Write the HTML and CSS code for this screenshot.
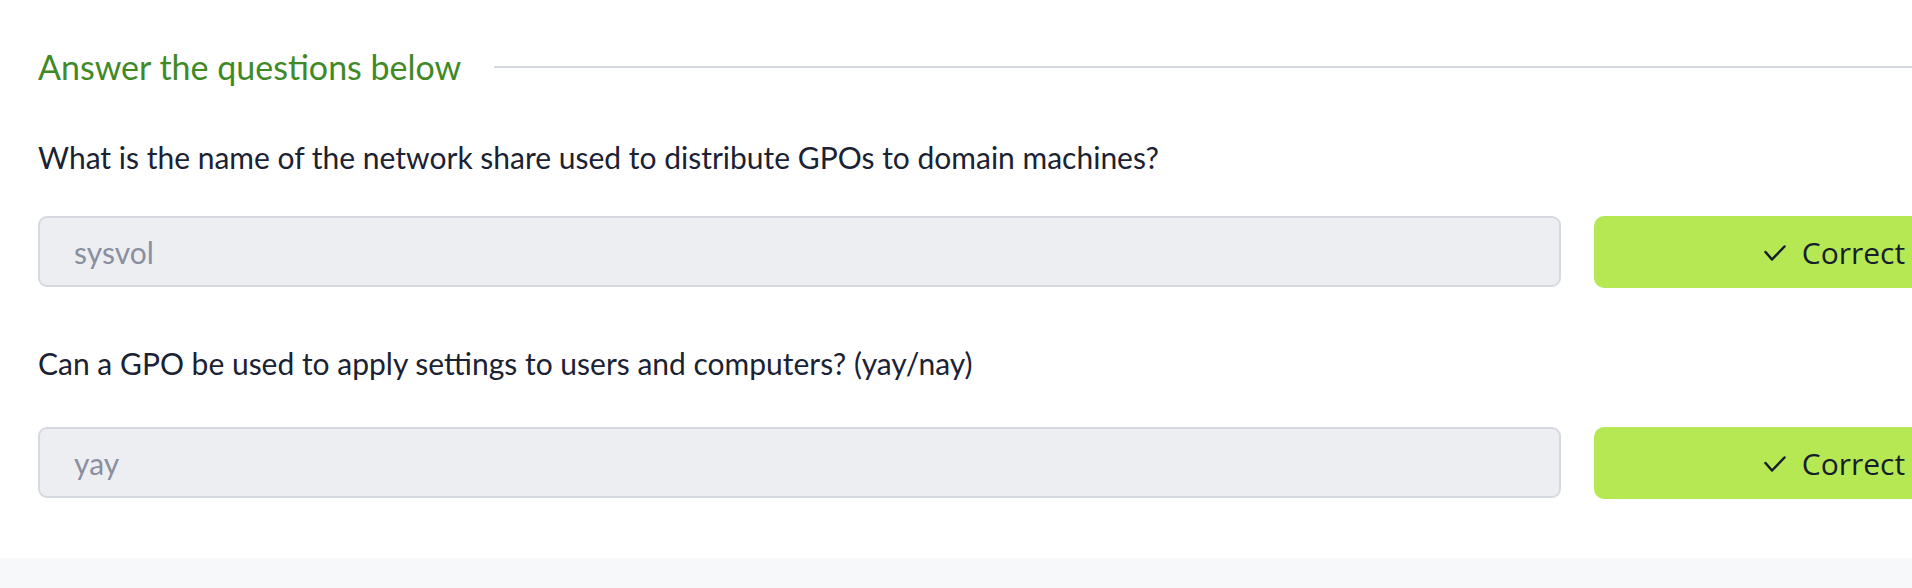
FILE: index.html
```html
<!DOCTYPE html>
<html lang="en">
<head>
<meta charset="utf-8">
<title>Answer the questions below</title>
<link rel="stylesheet" href="styles.css">
</head>
<body>
<main class="page">
  <section class="card">
    <div class="heading">
      <h2 class="heading-title">Answer the questions below</h2>
      <span class="heading-rule"></span>
    </div>

    <div class="question">
      <p class="question-text">What is the name of the network share used to distribute GPOs to domain machines?</p>
      <div class="answer-row">
        <input class="answer-input" type="text" value="sysvol" disabled>
        <button class="answer-btn" type="button">
          <svg class="check" width="22" height="17" viewBox="0 0 22 17" aria-hidden="true"><polyline points="1.5,7 8,14.5 20.5,1.5" fill="none" stroke="currentColor" stroke-width="2.5" stroke-linecap="round" stroke-linejoin="round"/></svg>
          <span>Correct</span>
        </button>
      </div>
    </div>

    <div class="question">
      <p class="question-text">Can a GPO be used to apply settings to users and computers? (yay/nay)</p>
      <div class="answer-row">
        <input class="answer-input" type="text" value="yay" disabled>
        <button class="answer-btn" type="button">
          <svg class="check" width="22" height="17" viewBox="0 0 22 17" aria-hidden="true"><polyline points="1.5,7 8,14.5 20.5,1.5" fill="none" stroke="currentColor" stroke-width="2.5" stroke-linecap="round" stroke-linejoin="round"/></svg>
          <span>Correct</span>
        </button>
      </div>
    </div>
  </section>
</main>
</body>
</html>
```

FILE: styles.css
```css
html, body {
  margin: 0;
  padding: 0;
  overflow: hidden;
}

body {
  background: #f7f8fa;
  font-family: Lato, "Open Sans", sans-serif;
  color: #1a2233;
}

.page {
  width: 2113px;
}

.card {
  background: #ffffff;
  padding: 46px 38px 59px 38px;
}

.heading {
  display: flex;
  align-items: center;
  gap: 33px;
  height: 42px;
}

.heading-title {
  margin: 0;
  font-size: 34px;
  line-height: 42px;
  font-weight: 400;
  color: #3f8a26;
  white-space: nowrap;
}

.heading-rule {
  flex: 1;
  height: 2px;
  background: #d4d7de;
}

.question {
  margin-top: 49px;
}

.question-text {
  margin: 0 0 39px 0;
  font-size: 30px;
  line-height: 40px;
  color: #1a2233;
}

.question + .question {
  margin-top: 55px;
}

.question + .question .question-text {
  margin-bottom: 44px;
}

.answer-row {
  display: flex;
  gap: 33px;
}

.answer-input {
  box-sizing: border-box;
  width: 1523px;
  height: 71px;
  padding: 0 34px;
  border: 2px solid #d6d9e0;
  border-radius: 9px;
  background: #edeef2;
  font-family: Lato, "Open Sans", sans-serif;
  font-size: 30px;
  color: #8a8f9f;
  -webkit-text-fill-color: #8a8f9f;
  opacity: 1;
}

.answer-btn {
  box-sizing: border-box;
  width: 481px;
  height: 72px;
  border: 0;
  border-radius: 10px;
  background: #b5e853;
  color: #161d2c;
  font-family: "Open Sans", sans-serif;
  font-size: 30px;
  display: flex;
  align-items: center;
  justify-content: center;
  gap: 16px;
  padding: 0;
}

.check {
  display: block;
  margin-top: 2px;
}
```
